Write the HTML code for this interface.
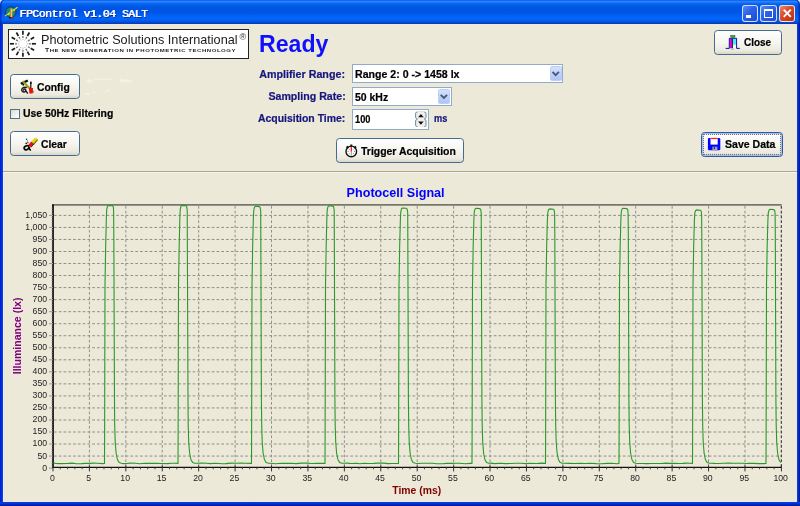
<!DOCTYPE html>
<html><head><meta charset="utf-8"><title>FPControl</title>
<style>
html,body{margin:0;padding:0;}
body{width:800px;height:506px;overflow:hidden;position:relative;background:#ece9d8;font-family:"Liberation Sans",sans-serif;font-size:11px;font-weight:bold;color:#000;}
.abs{position:absolute;}
#tb{position:absolute;left:0;top:0;width:800px;height:24px;border-radius:3.5px 3.5px 0 0 / 5px 5px 0 0;box-shadow:inset 1.6px 0 0 rgba(0,24,170,.55),inset -1.6px 0 0 rgba(0,24,150,.6);
background:linear-gradient(to bottom,#0a50e0 0%,#2a84ff 5%,#2482ff 8%,#0c6cf6 13%,#0260ea 19%,#0057e4 28%,#0054e2 42%,#0058ea 56%,#0260f4 66%,#0366fa 76%,#025ff0 84%,#0252dc 90%,#0444c8 95%,#0638b8 100%);}
#corner{position:absolute;left:0;top:0;width:800px;height:8px;background:#d4e2f6;}
#bl{position:absolute;left:0;top:24px;width:3.1px;height:482px;background:linear-gradient(to right,#0019cf,#0433dc 60%,#0a48e4);box-shadow:1px 0 0 rgba(240,243,252,.55);}
#br{position:absolute;left:796.8px;top:24px;width:3.2px;height:482px;background:linear-gradient(to right,#0a40e6,#0432d4 40%,#00128c);}
#bb{position:absolute;left:0;top:502.4px;width:800px;height:3.6px;background:linear-gradient(to bottom,#0a40e6,#0432d4 40%,#00169a);}
#ttext{position:absolute;left:19.3px;top:6.2px;font-family:"Liberation Mono",monospace;font-weight:normal;font-size:11.5px;letter-spacing:-0.5px;color:#fff;white-space:pre;line-height:15px;text-shadow:0.7px 0 0 #fff,1.2px 1px 0 #0a2a90;}
.cb{position:absolute;top:5px;width:16.5px;height:16.5px;border-radius:3px;border:1px solid rgba(255,255,255,.8);box-sizing:border-box;background:linear-gradient(135deg,#5a88f6 0%,#2e64ea 40%,#1c4ad0 100%);}
.cb.x{background:linear-gradient(135deg,#e8896a 0%,#d6492a 45%,#b8300f 100%);}
.btn{position:absolute;box-sizing:border-box;border:1px solid #456b94;border-radius:3.5px;background:linear-gradient(to bottom,#ffffff 0%,#f6f5ef 50%,#eceadf 85%,#d9d5c6 100%);}
.btn span{position:absolute;white-space:pre;font-size:11.5px;line-height:13px;}
.lab{position:absolute;color:#16167e;white-space:pre;font-size:11.5px;line-height:13px;text-align:right;transform-origin:100% 50%;}
.btn span,.inp span,#cbt,#ms{transform-origin:0 50%;}
.btn span,.inp span,#cbt,.lab{-webkit-text-stroke:0.22px currentColor;}
.inp{position:absolute;box-sizing:border-box;border:1px solid #90acc8;background:#fff;}
.inp span{position:absolute;left:3px;white-space:pre;font-size:11.5px;line-height:13px;}
.dd{position:absolute;box-sizing:border-box;border:1px solid #bccdf6;border-radius:1.5px;background:linear-gradient(to bottom,#d5e0fc 0%,#c1d2fb 50%,#aec3f7 100%);}
svg .g{stroke:#8f8f8a;stroke-width:1;stroke-dasharray:2.7 2.08;}
svg .t{font-family:"Liberation Sans",sans-serif;font-size:8.7px;font-weight:normal;fill:#222;}
svg .ttl{font-family:"Liberation Sans",sans-serif;font-size:12.6px;font-weight:bold;fill:#0000ff;}
svg .xl{font-family:"Liberation Sans",sans-serif;font-size:10.4px;font-weight:bold;fill:#800000;}
svg .yl{font-family:"Liberation Sans",sans-serif;font-size:10.55px;font-weight:bold;fill:#800080;}
</style></head><body>
<div id="wrap" style="position:absolute;left:0;top:0;width:800px;height:506px;will-change:transform;">
<div id="corner"></div>
<div id="tb"></div>
<div id="bl"></div><div id="br"></div><div id="bb"></div>
<!--ICON-->
<div id="ttext">FPControl v1.04 SALT</div>
<div class="cb" style="left:741.5px"><div class="abs" style="left:3.2px;top:9.3px;width:5.6px;height:2.3px;background:#fff"></div></div>
<div class="cb" style="left:760px"><div class="abs" style="left:3px;top:3px;width:8.5px;height:8.5px;border:1px solid #fff;border-top-width:2.5px;box-sizing:border-box"></div></div>
<div class="cb x" style="left:778.5px"><svg class="abs" style="left:0;top:0" width="15" height="15" viewBox="0 0 15 15"><path d="M3.7 3.7 L10.8 10.8 M10.8 3.7 L3.7 10.8" stroke="#fff" stroke-width="1.9" fill="none"/></svg></div>

<!-- logo -->
<div class="abs" id="logo" style="left:8px;top:29px;width:241px;height:30px;box-sizing:border-box;border:1px solid #222;background:#fff;"></div>
<div class="abs" id="lg1" style="left:41.3px;top:31.9px;transform:scaleX(1.004);transform-origin:0 50%;font-weight:normal;font-size:12.64px;line-height:16px;color:#1a1a1a;white-space:pre;">Photometric Solutions International</div>
<div class="abs" id="lgr" style="left:239.6px;top:32.2px;font-weight:normal;font-size:9.2px;line-height:10px;color:#333;">&reg;</div>
<div class="abs" id="lg2" style="left:44.5px;top:46.8px;font-weight:bold;font-size:5px;line-height:6px;color:#1a1a1a;white-space:pre;letter-spacing:0.4px;transform:scaleX(1.367);transform-origin:0 50%;">T<span style="font-size:4.4px">HE NEW GENERATION IN PHOTOMETRIC TECHNOLOGY</span></div>

<!-- Ready -->
<div class="abs" id="ready" style="left:259px;top:29.9px;font-size:23px;line-height:28px;color:#1010fa;white-space:pre;transform:scaleX(1.005);transform-origin:0 50%">Ready</div>

<!-- labels -->
<div class="lab" style="right:454.6px;top:67.8px;transform:scaleX(0.933)" id="l1">Amplifier Range:</div>
<div class="lab" style="right:454.6px;top:90px;transform:scaleX(0.923)" id="l2">Sampling Rate:</div>
<div class="lab" style="right:454.6px;top:111.8px;transform:scaleX(0.907)" id="l3">Acquisition Time:</div>

<div class="inp" style="left:351.6px;top:64px;width:211.9px;height:18.65px;"><span style="left:2px;top:2.8px;transform:scaleX(0.921)" id="t1">Range 2: 0 -&gt; 1458 lx</span>
 <div class="dd" style="right:0.8px;top:0.9px;width:11.8px;height:14.9px"></div></div>
<div class="inp" style="left:351.6px;top:87.3px;width:100px;height:18.6px;"><span style="left:2px;top:2.8px;transform:scaleX(0.909)" id="t2">50 kHz</span>
 <div class="dd" style="right:0.8px;top:0.9px;width:11.8px;height:14.9px"></div></div>
<div class="inp" style="left:351.6px;top:109.4px;width:77.2px;height:20.6px;"><span style="left:2.3px;top:2.6px;transform:scaleX(0.803)" id="t3">100</span></div>
<div class="lab" style="left:434.2px;top:111.9px;transform:scaleX(0.803);transform-origin:0 50%" id="ms">ms</div>

<!-- buttons -->
<div class="btn" style="left:10px;top:74px;width:70px;height:25px;"><span style="left:26.2px;top:5.5px;transform:scaleX(0.899)" id="b1">Config</span></div>
<div class="btn" style="left:10px;top:131px;width:70px;height:25px;"><span style="left:29.8px;top:5.5px;transform:scaleX(0.899)" id="b2">Clear</span></div>
<div class="btn" style="left:336px;top:138px;width:128px;height:25px;"><span style="left:23.6px;top:5.5px;transform:scaleX(0.909)" id="b3">Trigger Acquisition</span></div>
<div class="btn" style="left:714px;top:29.5px;width:68px;height:25px;"><span style="left:28.5px;top:5.3px;transform:scaleX(0.866)" id="b4">Close</span></div>
<div class="btn" style="left:701px;top:132px;width:82px;height:25px;border-color:#2a5aa8;box-shadow:inset 0 0 0 1.3px #a4bdec;"><span style="left:22.5px;top:5.2px;transform:scaleX(0.918)" id="b5">Save Data</span>
 <div class="abs" style="left:0.9px;top:0.9px;right:0.9px;bottom:0.9px;border:1px dotted rgba(90,80,62,.75);"></div></div>

<!-- checkbox -->
<div class="abs" style="left:9.7px;top:108.7px;width:10.2px;height:10.2px;box-sizing:border-box;border:1px solid #50708e;background:linear-gradient(135deg,#dcdcd4,#fff);"></div>
<div class="abs" id="cbt" style="left:23.1px;top:106.8px;transform:scaleX(0.906);white-space:pre;font-size:11.5px;line-height:13px;">Use 50Hz Filtering</div>

<!-- separator -->
<div class="abs" style="left:3px;top:171px;width:794px;height:1px;background:#a9a694;"></div>
<div class="abs" style="left:3px;top:172px;width:794px;height:1px;background:#f6f5ee;"></div>

<svg class="abs" style="left:0;top:0" width="800" height="506" viewBox="0 0 800 506">
<line x1="54.0" y1="456.07" x2="781.4" y2="456.07" class="g"/>
<line x1="54.0" y1="444.03" x2="781.4" y2="444.03" class="g"/>
<line x1="54.0" y1="432.00" x2="781.4" y2="432.00" class="g"/>
<line x1="54.0" y1="419.97" x2="781.4" y2="419.97" class="g"/>
<line x1="54.0" y1="407.93" x2="781.4" y2="407.93" class="g"/>
<line x1="54.0" y1="395.90" x2="781.4" y2="395.90" class="g"/>
<line x1="54.0" y1="383.87" x2="781.4" y2="383.87" class="g"/>
<line x1="54.0" y1="371.83" x2="781.4" y2="371.83" class="g"/>
<line x1="54.0" y1="359.80" x2="781.4" y2="359.80" class="g"/>
<line x1="54.0" y1="347.77" x2="781.4" y2="347.77" class="g"/>
<line x1="54.0" y1="335.73" x2="781.4" y2="335.73" class="g"/>
<line x1="54.0" y1="323.70" x2="781.4" y2="323.70" class="g"/>
<line x1="54.0" y1="311.66" x2="781.4" y2="311.66" class="g"/>
<line x1="54.0" y1="299.63" x2="781.4" y2="299.63" class="g"/>
<line x1="54.0" y1="287.60" x2="781.4" y2="287.60" class="g"/>
<line x1="54.0" y1="275.56" x2="781.4" y2="275.56" class="g"/>
<line x1="54.0" y1="263.53" x2="781.4" y2="263.53" class="g"/>
<line x1="54.0" y1="251.50" x2="781.4" y2="251.50" class="g"/>
<line x1="54.0" y1="239.46" x2="781.4" y2="239.46" class="g"/>
<line x1="54.0" y1="227.43" x2="781.4" y2="227.43" class="g"/>
<line x1="54.0" y1="215.40" x2="781.4" y2="215.40" class="g"/>
<line x1="89.42" y1="206" x2="89.42" y2="467.4" class="g"/>
<line x1="125.84" y1="206" x2="125.84" y2="467.4" class="g"/>
<line x1="162.26" y1="206" x2="162.26" y2="467.4" class="g"/>
<line x1="198.68" y1="206" x2="198.68" y2="467.4" class="g"/>
<line x1="235.10" y1="206" x2="235.10" y2="467.4" class="g"/>
<line x1="271.52" y1="206" x2="271.52" y2="467.4" class="g"/>
<line x1="307.94" y1="206" x2="307.94" y2="467.4" class="g"/>
<line x1="344.36" y1="206" x2="344.36" y2="467.4" class="g"/>
<line x1="380.78" y1="206" x2="380.78" y2="467.4" class="g"/>
<line x1="417.20" y1="206" x2="417.20" y2="467.4" class="g"/>
<line x1="453.62" y1="206" x2="453.62" y2="467.4" class="g"/>
<line x1="490.04" y1="206" x2="490.04" y2="467.4" class="g"/>
<line x1="526.46" y1="206" x2="526.46" y2="467.4" class="g"/>
<line x1="562.88" y1="206" x2="562.88" y2="467.4" class="g"/>
<line x1="599.30" y1="206" x2="599.30" y2="467.4" class="g"/>
<line x1="635.72" y1="206" x2="635.72" y2="467.4" class="g"/>
<line x1="672.14" y1="206" x2="672.14" y2="467.4" class="g"/>
<line x1="708.56" y1="206" x2="708.56" y2="467.4" class="g"/>
<line x1="744.98" y1="206" x2="744.98" y2="467.4" class="g"/>
<line x1="781.40" y1="206" x2="781.40" y2="467.4" class="g"/>
<line x1="52.5" y1="204.9" x2="781.6999999999999" y2="204.9" stroke="#77776e" stroke-width="1.9"/>
<line x1="781.3" y1="206" x2="781.3" y2="467.4" stroke="#3a3a3a" stroke-width="1" stroke-dasharray="2.7 2.08"/>
<line x1="53.0" y1="204.3" x2="53.0" y2="467.9" stroke="#111" stroke-width="1.8"/>
<line x1="52.0" y1="467.4" x2="781.9" y2="467.4" stroke="#111" stroke-width="1.3"/>
<line x1="49.0" y1="468.10" x2="53.0" y2="468.10" stroke="#999" stroke-width="1"/>
<text x="47.1" y="470.55" class="t" text-anchor="end">0</text>
<line x1="49.0" y1="456.07" x2="53.0" y2="456.07" stroke="#999" stroke-width="1"/>
<text x="47.1" y="458.52" class="t" text-anchor="end">50</text>
<line x1="49.0" y1="444.03" x2="53.0" y2="444.03" stroke="#999" stroke-width="1"/>
<text x="47.1" y="446.48" class="t" text-anchor="end">100</text>
<line x1="49.0" y1="432.00" x2="53.0" y2="432.00" stroke="#999" stroke-width="1"/>
<text x="47.1" y="434.45" class="t" text-anchor="end">150</text>
<line x1="49.0" y1="419.97" x2="53.0" y2="419.97" stroke="#999" stroke-width="1"/>
<text x="47.1" y="422.42" class="t" text-anchor="end">200</text>
<line x1="49.0" y1="407.93" x2="53.0" y2="407.93" stroke="#999" stroke-width="1"/>
<text x="47.1" y="410.38" class="t" text-anchor="end">250</text>
<line x1="49.0" y1="395.90" x2="53.0" y2="395.90" stroke="#999" stroke-width="1"/>
<text x="47.1" y="398.35" class="t" text-anchor="end">300</text>
<line x1="49.0" y1="383.87" x2="53.0" y2="383.87" stroke="#999" stroke-width="1"/>
<text x="47.1" y="386.32" class="t" text-anchor="end">350</text>
<line x1="49.0" y1="371.83" x2="53.0" y2="371.83" stroke="#999" stroke-width="1"/>
<text x="47.1" y="374.28" class="t" text-anchor="end">400</text>
<line x1="49.0" y1="359.80" x2="53.0" y2="359.80" stroke="#999" stroke-width="1"/>
<text x="47.1" y="362.25" class="t" text-anchor="end">450</text>
<line x1="49.0" y1="347.77" x2="53.0" y2="347.77" stroke="#999" stroke-width="1"/>
<text x="47.1" y="350.22" class="t" text-anchor="end">500</text>
<line x1="49.0" y1="335.73" x2="53.0" y2="335.73" stroke="#999" stroke-width="1"/>
<text x="47.1" y="338.18" class="t" text-anchor="end">550</text>
<line x1="49.0" y1="323.70" x2="53.0" y2="323.70" stroke="#999" stroke-width="1"/>
<text x="47.1" y="326.15" class="t" text-anchor="end">600</text>
<line x1="49.0" y1="311.66" x2="53.0" y2="311.66" stroke="#999" stroke-width="1"/>
<text x="47.1" y="314.11" class="t" text-anchor="end">650</text>
<line x1="49.0" y1="299.63" x2="53.0" y2="299.63" stroke="#999" stroke-width="1"/>
<text x="47.1" y="302.08" class="t" text-anchor="end">700</text>
<line x1="49.0" y1="287.60" x2="53.0" y2="287.60" stroke="#999" stroke-width="1"/>
<text x="47.1" y="290.05" class="t" text-anchor="end">750</text>
<line x1="49.0" y1="275.56" x2="53.0" y2="275.56" stroke="#999" stroke-width="1"/>
<text x="47.1" y="278.01" class="t" text-anchor="end">800</text>
<line x1="49.0" y1="263.53" x2="53.0" y2="263.53" stroke="#999" stroke-width="1"/>
<text x="47.1" y="265.98" class="t" text-anchor="end">850</text>
<line x1="49.0" y1="251.50" x2="53.0" y2="251.50" stroke="#999" stroke-width="1"/>
<text x="47.1" y="253.95" class="t" text-anchor="end">900</text>
<line x1="49.0" y1="239.46" x2="53.0" y2="239.46" stroke="#999" stroke-width="1"/>
<text x="47.1" y="241.91" class="t" text-anchor="end">950</text>
<line x1="49.0" y1="227.43" x2="53.0" y2="227.43" stroke="#999" stroke-width="1"/>
<text x="47.1" y="229.88" class="t" text-anchor="end">1,000</text>
<line x1="49.0" y1="215.40" x2="53.0" y2="215.40" stroke="#999" stroke-width="1"/>
<text x="47.1" y="217.85" class="t" text-anchor="end">1,050</text>
<line x1="51.2" y1="465.69" x2="53.0" y2="465.69" stroke="#999" stroke-width="0.5"/>
<line x1="51.2" y1="463.29" x2="53.0" y2="463.29" stroke="#999" stroke-width="0.5"/>
<line x1="51.2" y1="460.88" x2="53.0" y2="460.88" stroke="#999" stroke-width="0.5"/>
<line x1="51.2" y1="458.47" x2="53.0" y2="458.47" stroke="#999" stroke-width="0.5"/>
<line x1="51.2" y1="453.66" x2="53.0" y2="453.66" stroke="#999" stroke-width="0.5"/>
<line x1="51.2" y1="451.25" x2="53.0" y2="451.25" stroke="#999" stroke-width="0.5"/>
<line x1="51.2" y1="448.85" x2="53.0" y2="448.85" stroke="#999" stroke-width="0.5"/>
<line x1="51.2" y1="446.44" x2="53.0" y2="446.44" stroke="#999" stroke-width="0.5"/>
<line x1="51.2" y1="441.63" x2="53.0" y2="441.63" stroke="#999" stroke-width="0.5"/>
<line x1="51.2" y1="439.22" x2="53.0" y2="439.22" stroke="#999" stroke-width="0.5"/>
<line x1="51.2" y1="436.81" x2="53.0" y2="436.81" stroke="#999" stroke-width="0.5"/>
<line x1="51.2" y1="434.41" x2="53.0" y2="434.41" stroke="#999" stroke-width="0.5"/>
<line x1="51.2" y1="429.59" x2="53.0" y2="429.59" stroke="#999" stroke-width="0.5"/>
<line x1="51.2" y1="427.19" x2="53.0" y2="427.19" stroke="#999" stroke-width="0.5"/>
<line x1="51.2" y1="424.78" x2="53.0" y2="424.78" stroke="#999" stroke-width="0.5"/>
<line x1="51.2" y1="422.37" x2="53.0" y2="422.37" stroke="#999" stroke-width="0.5"/>
<line x1="51.2" y1="417.56" x2="53.0" y2="417.56" stroke="#999" stroke-width="0.5"/>
<line x1="51.2" y1="415.15" x2="53.0" y2="415.15" stroke="#999" stroke-width="0.5"/>
<line x1="51.2" y1="412.75" x2="53.0" y2="412.75" stroke="#999" stroke-width="0.5"/>
<line x1="51.2" y1="410.34" x2="53.0" y2="410.34" stroke="#999" stroke-width="0.5"/>
<line x1="51.2" y1="405.53" x2="53.0" y2="405.53" stroke="#999" stroke-width="0.5"/>
<line x1="51.2" y1="403.12" x2="53.0" y2="403.12" stroke="#999" stroke-width="0.5"/>
<line x1="51.2" y1="400.71" x2="53.0" y2="400.71" stroke="#999" stroke-width="0.5"/>
<line x1="51.2" y1="398.31" x2="53.0" y2="398.31" stroke="#999" stroke-width="0.5"/>
<line x1="51.2" y1="393.49" x2="53.0" y2="393.49" stroke="#999" stroke-width="0.5"/>
<line x1="51.2" y1="391.09" x2="53.0" y2="391.09" stroke="#999" stroke-width="0.5"/>
<line x1="51.2" y1="388.68" x2="53.0" y2="388.68" stroke="#999" stroke-width="0.5"/>
<line x1="51.2" y1="386.27" x2="53.0" y2="386.27" stroke="#999" stroke-width="0.5"/>
<line x1="51.2" y1="381.46" x2="53.0" y2="381.46" stroke="#999" stroke-width="0.5"/>
<line x1="51.2" y1="379.05" x2="53.0" y2="379.05" stroke="#999" stroke-width="0.5"/>
<line x1="51.2" y1="376.65" x2="53.0" y2="376.65" stroke="#999" stroke-width="0.5"/>
<line x1="51.2" y1="374.24" x2="53.0" y2="374.24" stroke="#999" stroke-width="0.5"/>
<line x1="51.2" y1="369.43" x2="53.0" y2="369.43" stroke="#999" stroke-width="0.5"/>
<line x1="51.2" y1="367.02" x2="53.0" y2="367.02" stroke="#999" stroke-width="0.5"/>
<line x1="51.2" y1="364.61" x2="53.0" y2="364.61" stroke="#999" stroke-width="0.5"/>
<line x1="51.2" y1="362.21" x2="53.0" y2="362.21" stroke="#999" stroke-width="0.5"/>
<line x1="51.2" y1="357.39" x2="53.0" y2="357.39" stroke="#999" stroke-width="0.5"/>
<line x1="51.2" y1="354.99" x2="53.0" y2="354.99" stroke="#999" stroke-width="0.5"/>
<line x1="51.2" y1="352.58" x2="53.0" y2="352.58" stroke="#999" stroke-width="0.5"/>
<line x1="51.2" y1="350.17" x2="53.0" y2="350.17" stroke="#999" stroke-width="0.5"/>
<line x1="51.2" y1="345.36" x2="53.0" y2="345.36" stroke="#999" stroke-width="0.5"/>
<line x1="51.2" y1="342.95" x2="53.0" y2="342.95" stroke="#999" stroke-width="0.5"/>
<line x1="51.2" y1="340.54" x2="53.0" y2="340.54" stroke="#999" stroke-width="0.5"/>
<line x1="51.2" y1="338.14" x2="53.0" y2="338.14" stroke="#999" stroke-width="0.5"/>
<line x1="51.2" y1="333.32" x2="53.0" y2="333.32" stroke="#999" stroke-width="0.5"/>
<line x1="51.2" y1="330.92" x2="53.0" y2="330.92" stroke="#999" stroke-width="0.5"/>
<line x1="51.2" y1="328.51" x2="53.0" y2="328.51" stroke="#999" stroke-width="0.5"/>
<line x1="51.2" y1="326.10" x2="53.0" y2="326.10" stroke="#999" stroke-width="0.5"/>
<line x1="51.2" y1="321.29" x2="53.0" y2="321.29" stroke="#999" stroke-width="0.5"/>
<line x1="51.2" y1="318.88" x2="53.0" y2="318.88" stroke="#999" stroke-width="0.5"/>
<line x1="51.2" y1="316.48" x2="53.0" y2="316.48" stroke="#999" stroke-width="0.5"/>
<line x1="51.2" y1="314.07" x2="53.0" y2="314.07" stroke="#999" stroke-width="0.5"/>
<line x1="51.2" y1="309.26" x2="53.0" y2="309.26" stroke="#999" stroke-width="0.5"/>
<line x1="51.2" y1="306.85" x2="53.0" y2="306.85" stroke="#999" stroke-width="0.5"/>
<line x1="51.2" y1="304.44" x2="53.0" y2="304.44" stroke="#999" stroke-width="0.5"/>
<line x1="51.2" y1="302.04" x2="53.0" y2="302.04" stroke="#999" stroke-width="0.5"/>
<line x1="51.2" y1="297.22" x2="53.0" y2="297.22" stroke="#999" stroke-width="0.5"/>
<line x1="51.2" y1="294.82" x2="53.0" y2="294.82" stroke="#999" stroke-width="0.5"/>
<line x1="51.2" y1="292.41" x2="53.0" y2="292.41" stroke="#999" stroke-width="0.5"/>
<line x1="51.2" y1="290.00" x2="53.0" y2="290.00" stroke="#999" stroke-width="0.5"/>
<line x1="51.2" y1="285.19" x2="53.0" y2="285.19" stroke="#999" stroke-width="0.5"/>
<line x1="51.2" y1="282.78" x2="53.0" y2="282.78" stroke="#999" stroke-width="0.5"/>
<line x1="51.2" y1="280.38" x2="53.0" y2="280.38" stroke="#999" stroke-width="0.5"/>
<line x1="51.2" y1="277.97" x2="53.0" y2="277.97" stroke="#999" stroke-width="0.5"/>
<line x1="51.2" y1="273.16" x2="53.0" y2="273.16" stroke="#999" stroke-width="0.5"/>
<line x1="51.2" y1="270.75" x2="53.0" y2="270.75" stroke="#999" stroke-width="0.5"/>
<line x1="51.2" y1="268.34" x2="53.0" y2="268.34" stroke="#999" stroke-width="0.5"/>
<line x1="51.2" y1="265.94" x2="53.0" y2="265.94" stroke="#999" stroke-width="0.5"/>
<line x1="51.2" y1="261.12" x2="53.0" y2="261.12" stroke="#999" stroke-width="0.5"/>
<line x1="51.2" y1="258.72" x2="53.0" y2="258.72" stroke="#999" stroke-width="0.5"/>
<line x1="51.2" y1="256.31" x2="53.0" y2="256.31" stroke="#999" stroke-width="0.5"/>
<line x1="51.2" y1="253.90" x2="53.0" y2="253.90" stroke="#999" stroke-width="0.5"/>
<line x1="51.2" y1="249.09" x2="53.0" y2="249.09" stroke="#999" stroke-width="0.5"/>
<line x1="51.2" y1="246.68" x2="53.0" y2="246.68" stroke="#999" stroke-width="0.5"/>
<line x1="51.2" y1="244.28" x2="53.0" y2="244.28" stroke="#999" stroke-width="0.5"/>
<line x1="51.2" y1="241.87" x2="53.0" y2="241.87" stroke="#999" stroke-width="0.5"/>
<line x1="51.2" y1="237.06" x2="53.0" y2="237.06" stroke="#999" stroke-width="0.5"/>
<line x1="51.2" y1="234.65" x2="53.0" y2="234.65" stroke="#999" stroke-width="0.5"/>
<line x1="51.2" y1="232.24" x2="53.0" y2="232.24" stroke="#999" stroke-width="0.5"/>
<line x1="51.2" y1="229.84" x2="53.0" y2="229.84" stroke="#999" stroke-width="0.5"/>
<line x1="51.2" y1="225.02" x2="53.0" y2="225.02" stroke="#999" stroke-width="0.5"/>
<line x1="51.2" y1="222.62" x2="53.0" y2="222.62" stroke="#999" stroke-width="0.5"/>
<line x1="51.2" y1="220.21" x2="53.0" y2="220.21" stroke="#999" stroke-width="0.5"/>
<line x1="51.2" y1="217.80" x2="53.0" y2="217.80" stroke="#999" stroke-width="0.5"/>
<line x1="51.2" y1="212.99" x2="53.0" y2="212.99" stroke="#999" stroke-width="0.5"/>
<line x1="51.2" y1="210.58" x2="53.0" y2="210.58" stroke="#999" stroke-width="0.5"/>
<line x1="51.2" y1="208.18" x2="53.0" y2="208.18" stroke="#999" stroke-width="0.5"/>
<line x1="53.00" y1="465.4" x2="53.00" y2="471.4" stroke="#333" stroke-width="1"/>
<text x="52.30" y="481.2" class="t" text-anchor="middle">0</text>
<line x1="89.42" y1="465.4" x2="89.42" y2="471.4" stroke="#333" stroke-width="1"/>
<text x="88.72" y="481.2" class="t" text-anchor="middle">5</text>
<line x1="125.84" y1="465.4" x2="125.84" y2="471.4" stroke="#333" stroke-width="1"/>
<text x="125.14" y="481.2" class="t" text-anchor="middle">10</text>
<line x1="162.26" y1="465.4" x2="162.26" y2="471.4" stroke="#333" stroke-width="1"/>
<text x="161.56" y="481.2" class="t" text-anchor="middle">15</text>
<line x1="198.68" y1="465.4" x2="198.68" y2="471.4" stroke="#333" stroke-width="1"/>
<text x="197.98" y="481.2" class="t" text-anchor="middle">20</text>
<line x1="235.10" y1="465.4" x2="235.10" y2="471.4" stroke="#333" stroke-width="1"/>
<text x="234.40" y="481.2" class="t" text-anchor="middle">25</text>
<line x1="271.52" y1="465.4" x2="271.52" y2="471.4" stroke="#333" stroke-width="1"/>
<text x="270.82" y="481.2" class="t" text-anchor="middle">30</text>
<line x1="307.94" y1="465.4" x2="307.94" y2="471.4" stroke="#333" stroke-width="1"/>
<text x="307.24" y="481.2" class="t" text-anchor="middle">35</text>
<line x1="344.36" y1="465.4" x2="344.36" y2="471.4" stroke="#333" stroke-width="1"/>
<text x="343.66" y="481.2" class="t" text-anchor="middle">40</text>
<line x1="380.78" y1="465.4" x2="380.78" y2="471.4" stroke="#333" stroke-width="1"/>
<text x="380.08" y="481.2" class="t" text-anchor="middle">45</text>
<line x1="417.20" y1="465.4" x2="417.20" y2="471.4" stroke="#333" stroke-width="1"/>
<text x="416.50" y="481.2" class="t" text-anchor="middle">50</text>
<line x1="453.62" y1="465.4" x2="453.62" y2="471.4" stroke="#333" stroke-width="1"/>
<text x="452.92" y="481.2" class="t" text-anchor="middle">55</text>
<line x1="490.04" y1="465.4" x2="490.04" y2="471.4" stroke="#333" stroke-width="1"/>
<text x="489.34" y="481.2" class="t" text-anchor="middle">60</text>
<line x1="526.46" y1="465.4" x2="526.46" y2="471.4" stroke="#333" stroke-width="1"/>
<text x="525.76" y="481.2" class="t" text-anchor="middle">65</text>
<line x1="562.88" y1="465.4" x2="562.88" y2="471.4" stroke="#333" stroke-width="1"/>
<text x="562.18" y="481.2" class="t" text-anchor="middle">70</text>
<line x1="599.30" y1="465.4" x2="599.30" y2="471.4" stroke="#333" stroke-width="1"/>
<text x="598.60" y="481.2" class="t" text-anchor="middle">75</text>
<line x1="635.72" y1="465.4" x2="635.72" y2="471.4" stroke="#333" stroke-width="1"/>
<text x="635.02" y="481.2" class="t" text-anchor="middle">80</text>
<line x1="672.14" y1="465.4" x2="672.14" y2="471.4" stroke="#333" stroke-width="1"/>
<text x="671.44" y="481.2" class="t" text-anchor="middle">85</text>
<line x1="708.56" y1="465.4" x2="708.56" y2="471.4" stroke="#333" stroke-width="1"/>
<text x="707.86" y="481.2" class="t" text-anchor="middle">90</text>
<line x1="744.98" y1="465.4" x2="744.98" y2="471.4" stroke="#333" stroke-width="1"/>
<text x="744.28" y="481.2" class="t" text-anchor="middle">95</text>
<line x1="781.40" y1="465.4" x2="781.40" y2="471.4" stroke="#333" stroke-width="1"/>
<text x="780.70" y="481.2" class="t" text-anchor="middle">100</text>
<line x1="60.28" y1="467.4" x2="60.28" y2="469.29999999999995" stroke="#3a3a3a" stroke-width="0.9"/>
<line x1="67.57" y1="467.4" x2="67.57" y2="469.29999999999995" stroke="#3a3a3a" stroke-width="0.9"/>
<line x1="74.85" y1="467.4" x2="74.85" y2="469.29999999999995" stroke="#3a3a3a" stroke-width="0.9"/>
<line x1="82.14" y1="467.4" x2="82.14" y2="469.29999999999995" stroke="#3a3a3a" stroke-width="0.9"/>
<line x1="96.70" y1="467.4" x2="96.70" y2="469.29999999999995" stroke="#3a3a3a" stroke-width="0.9"/>
<line x1="103.99" y1="467.4" x2="103.99" y2="469.29999999999995" stroke="#3a3a3a" stroke-width="0.9"/>
<line x1="111.27" y1="467.4" x2="111.27" y2="469.29999999999995" stroke="#3a3a3a" stroke-width="0.9"/>
<line x1="118.56" y1="467.4" x2="118.56" y2="469.29999999999995" stroke="#3a3a3a" stroke-width="0.9"/>
<line x1="133.12" y1="467.4" x2="133.12" y2="469.29999999999995" stroke="#3a3a3a" stroke-width="0.9"/>
<line x1="140.41" y1="467.4" x2="140.41" y2="469.29999999999995" stroke="#3a3a3a" stroke-width="0.9"/>
<line x1="147.69" y1="467.4" x2="147.69" y2="469.29999999999995" stroke="#3a3a3a" stroke-width="0.9"/>
<line x1="154.98" y1="467.4" x2="154.98" y2="469.29999999999995" stroke="#3a3a3a" stroke-width="0.9"/>
<line x1="169.54" y1="467.4" x2="169.54" y2="469.29999999999995" stroke="#3a3a3a" stroke-width="0.9"/>
<line x1="176.83" y1="467.4" x2="176.83" y2="469.29999999999995" stroke="#3a3a3a" stroke-width="0.9"/>
<line x1="184.11" y1="467.4" x2="184.11" y2="469.29999999999995" stroke="#3a3a3a" stroke-width="0.9"/>
<line x1="191.40" y1="467.4" x2="191.40" y2="469.29999999999995" stroke="#3a3a3a" stroke-width="0.9"/>
<line x1="205.96" y1="467.4" x2="205.96" y2="469.29999999999995" stroke="#3a3a3a" stroke-width="0.9"/>
<line x1="213.25" y1="467.4" x2="213.25" y2="469.29999999999995" stroke="#3a3a3a" stroke-width="0.9"/>
<line x1="220.53" y1="467.4" x2="220.53" y2="469.29999999999995" stroke="#3a3a3a" stroke-width="0.9"/>
<line x1="227.82" y1="467.4" x2="227.82" y2="469.29999999999995" stroke="#3a3a3a" stroke-width="0.9"/>
<line x1="242.38" y1="467.4" x2="242.38" y2="469.29999999999995" stroke="#3a3a3a" stroke-width="0.9"/>
<line x1="249.67" y1="467.4" x2="249.67" y2="469.29999999999995" stroke="#3a3a3a" stroke-width="0.9"/>
<line x1="256.95" y1="467.4" x2="256.95" y2="469.29999999999995" stroke="#3a3a3a" stroke-width="0.9"/>
<line x1="264.24" y1="467.4" x2="264.24" y2="469.29999999999995" stroke="#3a3a3a" stroke-width="0.9"/>
<line x1="278.80" y1="467.4" x2="278.80" y2="469.29999999999995" stroke="#3a3a3a" stroke-width="0.9"/>
<line x1="286.09" y1="467.4" x2="286.09" y2="469.29999999999995" stroke="#3a3a3a" stroke-width="0.9"/>
<line x1="293.37" y1="467.4" x2="293.37" y2="469.29999999999995" stroke="#3a3a3a" stroke-width="0.9"/>
<line x1="300.66" y1="467.4" x2="300.66" y2="469.29999999999995" stroke="#3a3a3a" stroke-width="0.9"/>
<line x1="315.22" y1="467.4" x2="315.22" y2="469.29999999999995" stroke="#3a3a3a" stroke-width="0.9"/>
<line x1="322.51" y1="467.4" x2="322.51" y2="469.29999999999995" stroke="#3a3a3a" stroke-width="0.9"/>
<line x1="329.79" y1="467.4" x2="329.79" y2="469.29999999999995" stroke="#3a3a3a" stroke-width="0.9"/>
<line x1="337.08" y1="467.4" x2="337.08" y2="469.29999999999995" stroke="#3a3a3a" stroke-width="0.9"/>
<line x1="351.64" y1="467.4" x2="351.64" y2="469.29999999999995" stroke="#3a3a3a" stroke-width="0.9"/>
<line x1="358.93" y1="467.4" x2="358.93" y2="469.29999999999995" stroke="#3a3a3a" stroke-width="0.9"/>
<line x1="366.21" y1="467.4" x2="366.21" y2="469.29999999999995" stroke="#3a3a3a" stroke-width="0.9"/>
<line x1="373.50" y1="467.4" x2="373.50" y2="469.29999999999995" stroke="#3a3a3a" stroke-width="0.9"/>
<line x1="388.06" y1="467.4" x2="388.06" y2="469.29999999999995" stroke="#3a3a3a" stroke-width="0.9"/>
<line x1="395.35" y1="467.4" x2="395.35" y2="469.29999999999995" stroke="#3a3a3a" stroke-width="0.9"/>
<line x1="402.63" y1="467.4" x2="402.63" y2="469.29999999999995" stroke="#3a3a3a" stroke-width="0.9"/>
<line x1="409.92" y1="467.4" x2="409.92" y2="469.29999999999995" stroke="#3a3a3a" stroke-width="0.9"/>
<line x1="424.48" y1="467.4" x2="424.48" y2="469.29999999999995" stroke="#3a3a3a" stroke-width="0.9"/>
<line x1="431.77" y1="467.4" x2="431.77" y2="469.29999999999995" stroke="#3a3a3a" stroke-width="0.9"/>
<line x1="439.05" y1="467.4" x2="439.05" y2="469.29999999999995" stroke="#3a3a3a" stroke-width="0.9"/>
<line x1="446.34" y1="467.4" x2="446.34" y2="469.29999999999995" stroke="#3a3a3a" stroke-width="0.9"/>
<line x1="460.90" y1="467.4" x2="460.90" y2="469.29999999999995" stroke="#3a3a3a" stroke-width="0.9"/>
<line x1="468.19" y1="467.4" x2="468.19" y2="469.29999999999995" stroke="#3a3a3a" stroke-width="0.9"/>
<line x1="475.47" y1="467.4" x2="475.47" y2="469.29999999999995" stroke="#3a3a3a" stroke-width="0.9"/>
<line x1="482.76" y1="467.4" x2="482.76" y2="469.29999999999995" stroke="#3a3a3a" stroke-width="0.9"/>
<line x1="497.32" y1="467.4" x2="497.32" y2="469.29999999999995" stroke="#3a3a3a" stroke-width="0.9"/>
<line x1="504.61" y1="467.4" x2="504.61" y2="469.29999999999995" stroke="#3a3a3a" stroke-width="0.9"/>
<line x1="511.89" y1="467.4" x2="511.89" y2="469.29999999999995" stroke="#3a3a3a" stroke-width="0.9"/>
<line x1="519.18" y1="467.4" x2="519.18" y2="469.29999999999995" stroke="#3a3a3a" stroke-width="0.9"/>
<line x1="533.74" y1="467.4" x2="533.74" y2="469.29999999999995" stroke="#3a3a3a" stroke-width="0.9"/>
<line x1="541.03" y1="467.4" x2="541.03" y2="469.29999999999995" stroke="#3a3a3a" stroke-width="0.9"/>
<line x1="548.31" y1="467.4" x2="548.31" y2="469.29999999999995" stroke="#3a3a3a" stroke-width="0.9"/>
<line x1="555.60" y1="467.4" x2="555.60" y2="469.29999999999995" stroke="#3a3a3a" stroke-width="0.9"/>
<line x1="570.16" y1="467.4" x2="570.16" y2="469.29999999999995" stroke="#3a3a3a" stroke-width="0.9"/>
<line x1="577.45" y1="467.4" x2="577.45" y2="469.29999999999995" stroke="#3a3a3a" stroke-width="0.9"/>
<line x1="584.73" y1="467.4" x2="584.73" y2="469.29999999999995" stroke="#3a3a3a" stroke-width="0.9"/>
<line x1="592.02" y1="467.4" x2="592.02" y2="469.29999999999995" stroke="#3a3a3a" stroke-width="0.9"/>
<line x1="606.58" y1="467.4" x2="606.58" y2="469.29999999999995" stroke="#3a3a3a" stroke-width="0.9"/>
<line x1="613.87" y1="467.4" x2="613.87" y2="469.29999999999995" stroke="#3a3a3a" stroke-width="0.9"/>
<line x1="621.15" y1="467.4" x2="621.15" y2="469.29999999999995" stroke="#3a3a3a" stroke-width="0.9"/>
<line x1="628.44" y1="467.4" x2="628.44" y2="469.29999999999995" stroke="#3a3a3a" stroke-width="0.9"/>
<line x1="643.00" y1="467.4" x2="643.00" y2="469.29999999999995" stroke="#3a3a3a" stroke-width="0.9"/>
<line x1="650.29" y1="467.4" x2="650.29" y2="469.29999999999995" stroke="#3a3a3a" stroke-width="0.9"/>
<line x1="657.57" y1="467.4" x2="657.57" y2="469.29999999999995" stroke="#3a3a3a" stroke-width="0.9"/>
<line x1="664.86" y1="467.4" x2="664.86" y2="469.29999999999995" stroke="#3a3a3a" stroke-width="0.9"/>
<line x1="679.42" y1="467.4" x2="679.42" y2="469.29999999999995" stroke="#3a3a3a" stroke-width="0.9"/>
<line x1="686.71" y1="467.4" x2="686.71" y2="469.29999999999995" stroke="#3a3a3a" stroke-width="0.9"/>
<line x1="693.99" y1="467.4" x2="693.99" y2="469.29999999999995" stroke="#3a3a3a" stroke-width="0.9"/>
<line x1="701.28" y1="467.4" x2="701.28" y2="469.29999999999995" stroke="#3a3a3a" stroke-width="0.9"/>
<line x1="715.84" y1="467.4" x2="715.84" y2="469.29999999999995" stroke="#3a3a3a" stroke-width="0.9"/>
<line x1="723.13" y1="467.4" x2="723.13" y2="469.29999999999995" stroke="#3a3a3a" stroke-width="0.9"/>
<line x1="730.41" y1="467.4" x2="730.41" y2="469.29999999999995" stroke="#3a3a3a" stroke-width="0.9"/>
<line x1="737.70" y1="467.4" x2="737.70" y2="469.29999999999995" stroke="#3a3a3a" stroke-width="0.9"/>
<line x1="752.26" y1="467.4" x2="752.26" y2="469.29999999999995" stroke="#3a3a3a" stroke-width="0.9"/>
<line x1="759.55" y1="467.4" x2="759.55" y2="469.29999999999995" stroke="#3a3a3a" stroke-width="0.9"/>
<line x1="766.83" y1="467.4" x2="766.83" y2="469.29999999999995" stroke="#3a3a3a" stroke-width="0.9"/>
<line x1="774.12" y1="467.4" x2="774.12" y2="469.29999999999995" stroke="#3a3a3a" stroke-width="0.9"/>
<path d="M53.4 462.4 L55.4 463.5 L60.6 463.6 L66.5 463.5 L72.2 463.1 L76.6 463.7 L81.6 463.6 L84.9 463.4 L88.6 463.4 L93.4 463.1 L97.0 463.3 L102.8 463.6 L104.5 463.4 L104.6 440.0 L104.8 360.0 L105.0 285.0 L105.7 245.0 L106.4 216.0 L106.8 209.0 L107.5 206.2 L108.5 205.4 L112.3 205.7 L113.2 206.6 L113.6 210.0 L113.8 230.0 L114.5 400.0 L114.7 425.0 L115.2 442.0 L116.1 453.0 L117.4 459.5 L119.2 462.6 L121.3 463.3 L123.3 463.6 L126.7 463.5 L130.1 463.1 L135.7 463.2 L139.4 463.7 L145.0 463.3 L150.9 463.4 L155.9 463.2 L161.7 463.5 L167.6 463.6 L171.5 463.3 L175.0 463.2 L178.0 463.4 L178.1 440.0 L178.3 360.0 L178.5 285.0 L179.2 245.0 L179.9 216.0 L180.3 209.0 L181.0 206.2 L182.0 205.4 L185.8 205.7 L186.7 206.6 L187.2 210.0 L187.3 230.0 L188.0 400.0 L188.2 425.0 L188.7 442.0 L189.6 453.0 L190.9 459.5 L192.7 462.6 L194.8 463.3 L196.8 463.3 L201.6 463.1 L206.6 463.3 L210.6 463.6 L215.0 463.3 L219.5 463.5 L222.6 463.7 L225.7 463.6 L231.2 463.1 L236.6 463.3 L241.3 463.1 L244.5 463.2 L251.5 463.4 L251.6 440.0 L251.8 360.0 L252.0 285.0 L252.7 245.0 L253.4 216.9 L253.8 209.9 L254.5 207.1 L255.5 206.3 L259.3 206.6 L260.2 207.5 L260.7 210.9 L260.8 230.9 L261.4 400.0 L261.7 425.0 L262.2 442.0 L263.1 453.0 L264.4 459.5 L266.2 462.6 L268.3 463.3 L270.3 463.2 L275.6 463.7 L281.4 463.3 L285.5 463.4 L290.8 463.2 L296.0 463.6 L301.6 463.1 L307.4 463.1 L311.5 463.5 L317.2 463.3 L323.0 463.4 L325.0 463.4 L325.1 440.0 L325.3 360.0 L325.5 285.0 L326.2 245.0 L326.9 216.4 L327.3 209.4 L328.0 206.6 L329.0 205.8 L332.8 206.1 L333.7 207.0 L334.2 210.4 L334.3 230.4 L334.9 400.0 L335.2 425.0 L335.7 442.0 L336.6 453.0 L337.9 459.5 L339.7 462.6 L341.8 463.3 L343.8 463.3 L347.3 463.1 L350.8 463.5 L356.8 463.2 L359.9 463.7 L364.5 463.3 L368.2 463.5 L373.7 463.4 L378.0 463.1 L383.7 463.1 L388.2 463.6 L391.6 463.5 L398.5 463.4 L398.6 440.0 L398.8 360.0 L399.0 285.0 L399.7 245.0 L400.4 218.6 L400.8 211.6 L401.5 208.8 L402.5 208.0 L406.3 208.3 L407.2 209.2 L407.7 212.6 L407.8 232.6 L408.4 400.0 L408.7 425.0 L409.2 442.0 L410.1 453.0 L411.4 459.5 L413.2 462.6 L415.3 463.3 L417.3 463.5 L422.7 463.2 L427.0 463.2 L432.5 463.3 L436.9 463.7 L442.4 463.7 L446.8 463.4 L452.0 463.4 L455.8 463.3 L459.3 463.3 L465.2 463.7 L470.1 463.4 L472.0 463.4 L472.1 440.0 L472.3 360.0 L472.5 285.0 L473.2 245.0 L473.9 218.9 L474.3 211.9 L475.0 209.1 L476.0 208.3 L479.8 208.6 L480.7 209.5 L481.2 212.9 L481.3 232.9 L481.9 400.0 L482.2 425.0 L482.7 442.0 L483.6 453.0 L484.9 459.5 L486.7 462.6 L488.8 463.3 L490.8 463.1 L494.6 463.6 L500.2 463.3 L505.6 463.6 L510.7 463.5 L515.9 463.3 L521.1 463.3 L525.5 463.6 L530.6 463.3 L536.4 463.5 L541.2 463.1 L545.5 463.4 L545.6 440.0 L545.8 360.0 L546.0 285.0 L546.7 245.0 L547.4 219.5 L547.8 212.5 L548.5 209.7 L549.5 208.9 L553.3 209.2 L554.2 210.1 L554.6 213.5 L554.8 233.5 L555.4 400.0 L555.7 425.0 L556.2 442.0 L557.1 453.0 L558.4 459.5 L560.2 462.6 L562.3 463.3 L564.3 463.2 L569.3 463.4 L574.8 463.5 L580.2 463.3 L585.1 463.5 L590.6 463.3 L596.1 463.6 L601.2 463.7 L607.0 463.4 L611.6 463.2 L617.1 463.7 L619.0 463.4 L619.1 440.0 L619.3 360.0 L619.5 285.0 L620.2 245.0 L620.9 218.9 L621.3 211.9 L622.0 209.1 L623.0 208.3 L626.8 208.6 L627.7 209.5 L628.1 212.9 L628.3 232.9 L628.9 400.0 L629.2 425.0 L629.7 442.0 L630.6 453.0 L631.9 459.5 L633.7 462.6 L635.8 463.3 L637.8 463.5 L643.0 463.5 L646.5 463.6 L651.2 463.5 L655.5 463.5 L660.8 463.5 L666.0 463.1 L669.4 463.4 L674.4 463.2 L679.5 463.5 L682.6 463.4 L686.3 463.1 L689.7 463.3 L692.5 463.4 L692.6 440.0 L692.8 360.0 L693.0 285.0 L693.7 245.0 L694.4 220.5 L694.8 213.5 L695.5 210.7 L696.5 209.9 L700.3 210.2 L701.2 211.1 L701.6 214.5 L701.8 234.5 L702.4 400.0 L702.7 425.0 L703.2 442.0 L704.1 453.0 L705.4 459.5 L707.2 462.6 L709.3 463.3 L711.3 463.2 L714.4 463.4 L718.5 463.5 L723.3 463.2 L729.0 463.1 L733.2 463.3 L737.5 463.2 L743.0 463.3 L746.1 463.5 L749.4 463.4 L753.4 463.4 L759.3 463.6 L763.5 463.6 L766.0 463.4 L766.1 440.0 L766.3 360.0 L766.5 285.0 L767.2 245.0 L767.9 219.9 L768.3 212.9 L769.0 210.1 L770.0 209.3 L773.8 209.6 L774.7 210.5 L775.1 213.9 L775.3 233.9 L775.9 400.0 L776.2 425.0 L776.7 442.0 L777.6 453.0 L778.9 459.5 L780.7 462.6" fill="none" stroke="#2a982a" stroke-width="1.1" stroke-linejoin="round"/>
<text x="395.6" y="197" class="ttl" text-anchor="middle">Photocell Signal</text>
<text x="416.7" y="493.9" class="xl" text-anchor="middle">Time (ms)</text>
<text transform="translate(21.0 335.9) rotate(-90)" class="yl" text-anchor="middle">Illuminance (lx)</text>
<!-- title icon -->
<g transform="translate(0 -0.6)">
<circle cx="10.8" cy="12.6" r="5.2" fill="#178a7c" stroke="#0b3a55" stroke-width="0.9"/>
<path d="M5 16.7 L17.6 7.8" stroke="#e6de28" stroke-width="1.1"/>
<path d="M7.3 15.4 L9.4 13.2 L9.6 15.3 Z M12.6 11.6 L14.6 9.4 L14.9 11.4 Z" fill="#f2ee20"/>
<rect x="9.9" y="9" width="2.5" height="9" fill="#c48a38"/>
<rect x="11.2" y="9.4" width="0.9" height="8.4" fill="#f3da8c"/>
<rect x="9" y="17.7" width="2.3" height="1.3" fill="#30100c"/>
<rect x="11.3" y="17.7" width="2.3" height="1.3" fill="#c01008"/>
</g>
<!-- sunburst -->
<path d="M31.90 43.80 L35.90 43.80" stroke="#1c1c1c" stroke-width="1.7"/>
<path d="M28.80 43.80 L30.80 43.80" stroke="#6c6c6c" stroke-width="1.3"/>
<path d="M26.70 43.80 L27.90 43.80" stroke="#b0b0b0" stroke-width="1.0"/>
<path d="M30.69 39.30 L34.16 37.30" stroke="#1c1c1c" stroke-width="1.7"/>
<path d="M28.01 40.85 L29.74 39.85" stroke="#6c6c6c" stroke-width="1.3"/>
<path d="M26.19 41.90 L27.23 41.30" stroke="#b0b0b0" stroke-width="1.0"/>
<path d="M27.40 36.01 L29.40 32.54" stroke="#1c1c1c" stroke-width="1.7"/>
<path d="M25.85 38.69 L26.85 36.96" stroke="#6c6c6c" stroke-width="1.3"/>
<path d="M24.80 40.51 L25.40 39.47" stroke="#b0b0b0" stroke-width="1.0"/>
<path d="M22.90 34.80 L22.90 30.80" stroke="#1c1c1c" stroke-width="1.7"/>
<path d="M22.90 37.90 L22.90 35.90" stroke="#6c6c6c" stroke-width="1.3"/>
<path d="M22.90 40.00 L22.90 38.80" stroke="#b0b0b0" stroke-width="1.0"/>
<path d="M18.40 36.01 L16.40 32.54" stroke="#1c1c1c" stroke-width="1.7"/>
<path d="M19.95 38.69 L18.95 36.96" stroke="#6c6c6c" stroke-width="1.3"/>
<path d="M21.00 40.51 L20.40 39.47" stroke="#b0b0b0" stroke-width="1.0"/>
<path d="M15.11 39.30 L11.64 37.30" stroke="#1c1c1c" stroke-width="1.7"/>
<path d="M17.79 40.85 L16.06 39.85" stroke="#6c6c6c" stroke-width="1.3"/>
<path d="M19.61 41.90 L18.57 41.30" stroke="#b0b0b0" stroke-width="1.0"/>
<path d="M13.90 43.80 L9.90 43.80" stroke="#1c1c1c" stroke-width="1.7"/>
<path d="M17.00 43.80 L15.00 43.80" stroke="#6c6c6c" stroke-width="1.3"/>
<path d="M19.10 43.80 L17.90 43.80" stroke="#b0b0b0" stroke-width="1.0"/>
<path d="M15.11 48.30 L11.64 50.30" stroke="#1c1c1c" stroke-width="1.7"/>
<path d="M17.79 46.75 L16.06 47.75" stroke="#6c6c6c" stroke-width="1.3"/>
<path d="M19.61 45.70 L18.57 46.30" stroke="#b0b0b0" stroke-width="1.0"/>
<path d="M18.40 51.59 L16.40 55.06" stroke="#1c1c1c" stroke-width="1.7"/>
<path d="M19.95 48.91 L18.95 50.64" stroke="#6c6c6c" stroke-width="1.3"/>
<path d="M21.00 47.09 L20.40 48.13" stroke="#b0b0b0" stroke-width="1.0"/>
<path d="M22.90 52.80 L22.90 56.80" stroke="#1c1c1c" stroke-width="1.7"/>
<path d="M22.90 49.70 L22.90 51.70" stroke="#6c6c6c" stroke-width="1.3"/>
<path d="M22.90 47.60 L22.90 48.80" stroke="#b0b0b0" stroke-width="1.0"/>
<path d="M27.40 51.59 L29.40 55.06" stroke="#1c1c1c" stroke-width="1.7"/>
<path d="M25.85 48.91 L26.85 50.64" stroke="#6c6c6c" stroke-width="1.3"/>
<path d="M24.80 47.09 L25.40 48.13" stroke="#b0b0b0" stroke-width="1.0"/>
<path d="M30.69 48.30 L34.16 50.30" stroke="#1c1c1c" stroke-width="1.7"/>
<path d="M28.01 46.75 L29.74 47.75" stroke="#6c6c6c" stroke-width="1.3"/>
<path d="M26.19 45.70 L27.23 46.30" stroke="#b0b0b0" stroke-width="1.0"/>
<!-- config icon -->
<path d="M20.8 83.7 L27.8 80.5" stroke="#0c0c0c" stroke-width="2.3"/>
<path d="M24.4 81.2 L22.9 85.6" stroke="#0c0c0c" stroke-width="1.7"/>
<path d="M22.7 81.2 L33.7 92.4" stroke="#9c9c18" stroke-width="2.1"/>
<path d="M30.8 81.6 L30.8 88.2" stroke="#111" stroke-width="1.2"/>
<rect x="30.1" y="82" width="1.5" height="2" fill="#111"/>
<path d="M28.9 88 H33 L32.6 93.5 H29.4 Z" fill="#f20c0c"/>
<path d="M26.9 87.6 C23 86.5 20.5 89.4 22.3 91.3 C24 92.9 26.7 91 25.4 89.3 C24.6 88.5 23.1 89.6 23.8 90.5 M25.6 90.4 L27.8 93.6" stroke="#1c1c1c" stroke-width="1.45" fill="none"/>
<!-- clear icon -->
<path d="M32.3 143.4 L36.0 138.8" stroke="#dcd80c" stroke-width="3.3"/>
<path d="M34.8 139.4 L37.0 137.2 L37.3 139.9 Z" fill="#e6e210"/>
<path d="M33.7 144.4 L37.6 139.6" stroke="#77770a" stroke-width="1.3"/>
<path d="M29.6 146.1 L32.5 142.6" stroke="#f20c0c" stroke-width="3.3"/>
<path d="M31.0 147.3 L33.9 143.9" stroke="#5c1010" stroke-width="1"/>
<path d="M29.4 146.4 C26.4 144.4 23.3 147 24.4 149 C25.5 150.9 28.6 149.6 29.3 146.8 C28.9 148.9 29.3 150.2 31 149.7" stroke="#0c0c0c" stroke-width="1.75" fill="none"/>
<circle cx="26.5" cy="139.2" r="0.7" fill="#222"/><circle cx="26.2" cy="143.3" r="0.85" fill="#1a1a1a"/><circle cx="27.9" cy="142.7" r="0.7" fill="#333"/><circle cx="27.4" cy="140.9" r="0.55" fill="#444"/>
<!-- stopwatch -->
<circle cx="351.3" cy="151.4" r="5.3" fill="#fff" stroke="#111" stroke-width="1.4"/>
<path d="M351.3 144.4 L351.3 146.6 M346.6 146.5 L348.3 148.1 M356.0 146.5 L354.3 148.1" stroke="#111" stroke-width="2"/>
<path d="M351.3 151.6 L351.3 147" stroke="#f02020" stroke-width="1.3"/>
<path d="M351.3 151.4 L351.3 155.6" stroke="#555" stroke-width="0.6"/>
<path d="M347.6 151.4 h1 M354 151.4 h1 M348.7 148.8 l.7 .7 M353.9 148.8 l-.7 .7 M348.7 154 l.7 -.7 M353.9 154 l-.7 -.7" stroke="#333" stroke-width="0.7"/>
<!-- close icon -->
<rect x="730.8" y="35.5" width="4.1" height="1.7" fill="#10c828" stroke="#184018" stroke-width="0.5"/>
<rect x="729.7" y="38.6" width="2.3" height="9.6" fill="#d408d0"/>
<rect x="731.9" y="38.6" width="1" height="9.6" fill="#280830"/>
<rect x="733" y="38.8" width="3.1" height="6" fill="#48e6f6"/>
<rect x="733" y="44.8" width="3.1" height="3.4" fill="#e4fafc"/>
<path d="M725.7 48.4 H729.3 V38.3 H736.6 V48.4 H739.8" stroke="#1010a0" stroke-width="1" fill="none"/>
<path d="M730.6 48.8 H734.4 L733.4 49.6 H731.2 Z" fill="#888"/>
<!-- floppy -->
<rect x="707.9" y="137.9" width="12.4" height="12.4" rx="1.2" fill="#0404fc"/>
<rect x="710.5" y="137.9" width="7.2" height="6.7" fill="#fff"/>
<rect x="710.5" y="137.9" width="7.2" height="1.2" fill="#fa2020"/>
<rect x="712.4" y="146.7" width="5" height="3.6" fill="#a4a4a4"/>
<rect x="713.8" y="147.2" width="1.2" height="1.8" fill="#1010e0"/>


<!-- smudges -->
<g fill="#f3f1e8">
<path d="M85.5 82.6 L87.8 79.2 L91 79.2 L93.8 82.6 Z"/>
<rect x="93.8" y="78.7" width="18.2" height="1.1"/>
<path d="M119.1 77.2 L122 79.4 L130 79.6 L133.3 82.6 L120.4 82.6 Z"/>
<path d="M104.9 92.3 L105.6 90.6 L109.6 89.4 L109.2 90.8 Z"/>
<path d="M92.2 91 L97.4 92.5 L92.4 92.4 Z"/>
<rect x="85.1" y="93" width="4.8" height="1.8" rx=".8"/>
</g>
<!-- spin -->
<rect x="415.6" y="112.2" width="10.4" height="6.3" rx="1.2" fill="#eeede8" stroke="#5c7c9e" stroke-width="0.9"/>
<rect x="415.6" y="119.6" width="10.4" height="6.9" rx="1.2" fill="#eeede8" stroke="#5c7c9e" stroke-width="0.9"/>
<rect x="417.4" y="111.7" width="6.8" height="15.4" fill="#f0efea"/>
<path d="M420.9 113.9 L423.7 117.2 L418.1 117.2 Z" fill="#111"/>
<path d="M420.9 124.8 L423.7 121.5 L418.1 121.5 Z" fill="#111"/>
<!-- dropdown chevrons -->
<path d="M552.5 71.9 L555.7 75.1 L558.9 71.9" stroke="#475a7c" stroke-width="1.9" fill="none"/>
<path d="M440.7 94.8 L443.9 98.0 L447.1 94.8" stroke="#475a7c" stroke-width="1.9" fill="none"/>

</svg>
</div>
</body></html>
